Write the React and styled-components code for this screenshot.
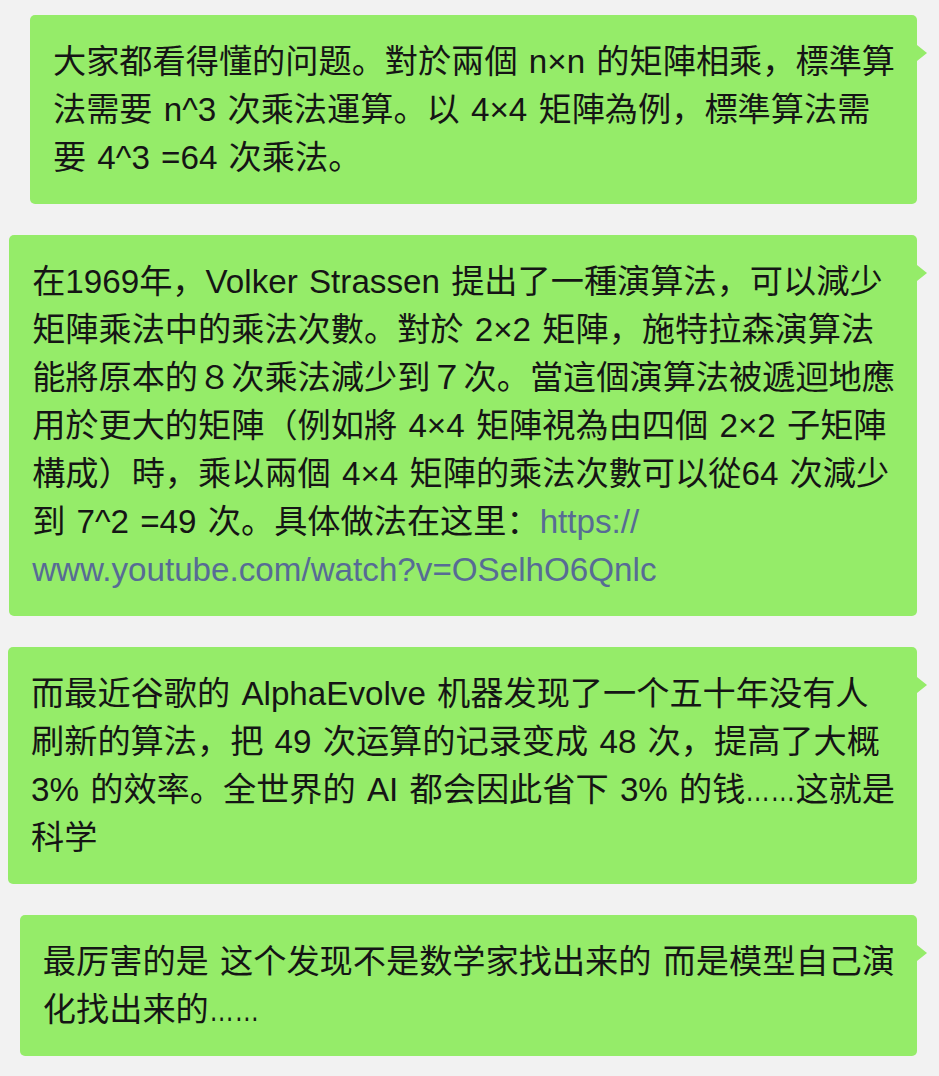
import React from "react";
import styled, { createGlobalStyle } from "styled-components";

const messages = [
  [
    ["大家都看得懂的问题。對於兩個 n×n 的矩陣相乘，標準算"],
    ["法需要 n^3 次乘法運算。以 4×4 矩陣為例，標準算法需"],
    ["要 4^3 =64 次乘法。"],
  ],
  [
    ["在1969年，Volker Strassen 提出了一種演算法，可以減少"],
    ["矩陣乘法中的乘法次數。對於 2×2 矩陣，施特拉森演算法"],
    ["能將原本的８次乘法減少到７次。當這個演算法被遞迴地應"],
    ["用於更大的矩陣（例如將 4×4 矩陣視為由四個 2×2 子矩陣"],
    ["構成）時，乘以兩個 4×4 矩陣的乘法次數可以從64 次減少"],
    ["到 7^2 =49 次。具体做法在这里：", "https://"],
    ["", "www.youtube.com/watch?v=OSelhO6Qnlc"],
  ],
  [
    ["而最近谷歌的 AlphaEvolve 机器发现了一个五十年没有人"],
    ["刷新的算法，把 49 次运算的记录变成 48 次，提高了大概"],
    ["3% 的效率。全世界的 AI 都会因此省下 3% 的钱……这就是"],
    ["科学"],
  ],
  [
    ["最厉害的是 这个发现不是数学家找出来的 而是模型自己演"],
    ["化找出来的……"],
  ],
];

// the ellipsis is drawn tighter than the Latin font gives it
const renderText = (text) =>
  text.split("……").map((part, i) => (
    <React.Fragment key={i}>
      {i > 0 && <Ellipsis>……</Ellipsis>}
      {part}
    </React.Fragment>
  ));

const App = () => {
  return (
    <>
      <GlobalStyle />
      <Thread>
        {messages.map((lines, i) => (
          <Bubble key={i}>
            {lines.map(([text, link], j) => (
              <Line key={j}>
                {renderText(text)}
                {link && <Link>{link}</Link>}
              </Line>
            ))}
          </Bubble>
        ))}
      </Thread>
    </>
  );
};

export default App;

const GlobalStyle = createGlobalStyle`
  body {
    margin: 0;
    background: #f2f2f2;
  }
`;

const Thread = styled.div`
  display: flex;
  flex-direction: column;
  align-items: flex-end;
  gap: 31px;
  padding: 15px 22px 20px 0;
`;

const Bubble = styled.div`
  position: relative;
  background: #95ec69;
  border-radius: 5px;
  padding: 23px 22px 22px 23px;
  font-family: "Liberation Sans", "Noto Sans CJK SC", sans-serif;
  font-size: 33.2px;
  line-height: 48px;
  word-spacing: 2px;
  color: #151515;

  &::after {
    content: "";
    position: absolute;
    right: -10px;
    top: 30px;
    border-left: 10px solid #95ec69;
    border-top: 8px solid transparent;
    border-bottom: 8px solid transparent;
  }
`;

const Line = styled.span`
  display: block;
  white-space: nowrap;
`;

const Ellipsis = styled.span`
  display: inline-block;
  width: 50px;
  transform: scaleX(0.76);
  transform-origin: left center;
`;

const Link = styled.span`
  color: #576b95;
`;
